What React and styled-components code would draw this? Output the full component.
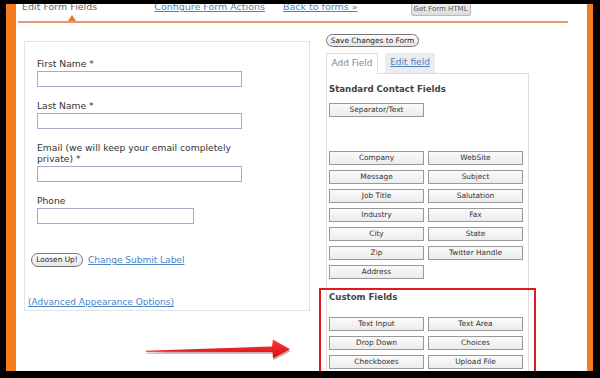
import React from 'react';
import styled, { createGlobalStyle } from 'styled-components';

const GlobalStyle = createGlobalStyle`
  html, body {
    margin: 0;
    padding: 0;
    background: #000;
  }
  * {
    box-sizing: border-box;
  }
`

const Frame = styled.div`
  width: 600px;
  height: 378px;
  background: #000;
  padding: 4px 7px 7px 6px;
  display: flex;
`

const OrangeBand = styled.div`
  flex: 1;
  display: flex;
  background: #f47b20;
  padding: 0 6px 0 10px;
`

const Sheet = styled.div`
  flex: 1;
  background: #fff;
  position: relative;
  overflow: hidden;
  font-family: "DejaVu Sans", Verdana, sans-serif;
  color: #333;
`

const Header = styled.div`
  height: 19px;
  margin: 0 19px 0 2px;
  padding-left: 4px;
  border-bottom: 2px solid #e39b70;
  display: flex;
  align-items: flex-start;
  position: relative;
`

const NavItem = styled.span`
  margin-top: -3px;
  margin-left: ${p => p.$offset || 0}px;
  font-size: 9.5px;
  line-height: 12px;
  color: ${p => (p.$link ? '#4a82c4' : '#666')};
  text-decoration: ${p => (p.$link ? 'underline' : 'none')};
  white-space: nowrap;
`

const NavButton = styled.span`
  margin-left: ${p => p.$offset || 0}px;
  margin-top: -2px;
  width: 60px;
  height: 14px;
  background: linear-gradient(#f0f0f0, #dcdcdc);
  border: 1px solid #bbb;
  border-radius: 2px;
  font-size: 7px;
  line-height: 12px;
  color: #555;
  text-align: center;
`

const Pointer = styled.span`
  position: absolute;
  left: 50px;
  bottom: 0;
  width: 0;
  height: 0;
  border-left: 4px solid transparent;
  border-right: 4px solid transparent;
  border-bottom: 6px solid #e57a2e;
`

const Main = styled.div`
  display: flex;
  align-items: flex-start;
  padding-left: 8px;
  gap: 16px;
`

const FormPanel = styled.div`
  width: 286px;
  height: 270px;
  margin-top: 18px;
  border: 1px solid #e2e2e2;
  padding: 16px 0 0 4px;
  display: flex;
  flex-direction: column;
`

const Fields = styled.div`
  padding-left: 8px;
`

const FieldGroup = styled.div`
  margin-bottom: 13px;
`

const Label = styled.div`
  font-size: 9.2px;
  line-height: 11px;
  color: #333;
  max-width: 212px;
  margin-bottom: 2px;
`

const TextBox = styled.div`
  width: ${p => p.$width}px;
  height: 16px;
  border: 1px solid #aaa7d2;
  background: #fff;
`

const SubmitRow = styled.div`
  display: flex;
  align-items: center;
  gap: 5px;
  margin-top: 16px;
  padding-left: 2px;
`

const PillButton = styled.span`
  display: inline-block;
  width: ${p => p.$width}px;
  height: ${p => p.$height || 14}px;
  border: 1px solid #777;
  border-radius: 8px;
  background: linear-gradient(#fdfdfd, #e4e4e4);
  font-size: 7.4px;
  line-height: ${p => (p.$height || 14) - 2}px;
  color: #222;
  text-align: center;
  white-space: nowrap;
`

const TextLink = styled.span`
  font-size: 9px;
  line-height: 12px;
  color: #4a82c4;
  text-decoration: underline;
  white-space: nowrap;
`

const AdvancedLink = styled(TextLink)`
  margin-top: 29px;
  margin-left: -1px;
`

const SideColumn = styled.div`
  width: 203px;
  padding-top: 5px;
`

const Tabs = styled.div`
  display: flex;
  margin-top: 6px;
  height: 20px;
  align-items: flex-end;
  position: relative;
  z-index: 1;
`

const Tab = styled.div`
  width: ${p => p.$width}px;
  margin-left: ${p => p.$offset || 0}px;
  margin-bottom: ${p => (p.$active ? -1 : 0)}px;
  height: ${p => (p.$active ? 21 : 20)}px;
  background: ${p => (p.$active ? '#fff' : '#ececec')};
  border: ${p => (p.$active ? '1px solid #ddd' : 'none')};
  border-bottom: none;
  font-size: 9px;
  line-height: 19px;
  text-align: center;
  color: ${p => (p.$active ? '#888' : '#4a82c4')};
  text-decoration: ${p => (p.$active ? 'none' : 'underline')};
`

const FieldPanel = styled.div`
  border: 1px solid #ddd;
  border-bottom: none;
  padding: 9px 5px 40px 2px;
`

const SectionTitle = styled.div`
  font-size: 8.6px;
  line-height: 12px;
  font-weight: bold;
  color: #444;
`

const ButtonGrid = styled.div`
  display: grid;
  grid-template-columns: 95px 95px;
  column-gap: 4px;
  row-gap: 5px;
  margin-top: ${p => p.$top}px;
`

const FieldButton = styled.div`
  height: 14px;
  border: 1px solid #999;
  background: linear-gradient(#fafafa, #ececec);
  font-size: 7.4px;
  line-height: 12px;
  text-align: center;
  color: #333;
  white-space: nowrap;
`

const CustomSection = styled.div`
  position: relative;
  margin-top: 9px;
  padding-top: 3px;
  &::before {
    content: '';
    position: absolute;
    top: 0;
    left: -10px;
    right: -13px;
    bottom: -30px;
    border: 2.5px solid #e0191e;
    pointer-events: none;
  }
`

const ArrowMark = styled.svg`
  position: absolute;
  left: 112px;
  top: 330px;
`

const standardFields = [
  'Company', 'WebSite',
  'Message', 'Subject',
  'Job Title', 'Salutation',
  'Industry', 'Fax',
  'City', 'State',
  'Zip', 'Twitter Handle',
  'Address',
];

const customFields = [
  'Text Input', 'Text Area',
  'Drop Down', 'Choices',
  'Checkboxes', 'Upload File',
];

const formFields = [
  { label: 'First Name *', width: 205 },
  { label: 'Last Name *', width: 205 },
  { label: 'Email (we will keep your email completely private) *', width: 205 },
  { label: 'Phone', width: 157 },
];

function Arrow() {
  return (
    <ArrowMark width="166" height="28" viewBox="0 0 166 28">
      <defs>
        <linearGradient id="arrowFill" x1="0" y1="0" x2="0" y2="1">
          <stop offset="0" stopColor="#ff3a3a" />
          <stop offset="1" stopColor="#d10d10" />
        </linearGradient>
      </defs>
      <path
        d="M18 17.5 L144 13.2 L145 6 L162 16 L145 25 L144.5 18.6 L18 18.6 Z"
        fill="#7a0000"
        opacity="0.35"
        transform="translate(0.5 1.2)"
      />
      <path
        d="M18 16.8 L144 12.5 L145 5.5 L162 15.2 L145 24.3 L144.5 18 L18 17.8 Z"
        fill="url(#arrowFill)"
      />
    </ArrowMark>
  );
}

export default function App() {
  return (
    <Frame>
      <GlobalStyle />
      <OrangeBand>
        <Sheet>
          <Header>
            <NavItem>Edit Form Fields</NavItem>
            <NavItem $link $offset={57}>Configure Form Actions</NavItem>
            <NavItem $link $offset={18}>Back to forms »</NavItem>
            <NavButton $offset={53}>Get Form HTML</NavButton>
            <Pointer />
          </Header>

          <Main>
            <FormPanel>
              <Fields>
                {formFields.map(f => (
                  <FieldGroup key={f.label}>
                    <Label>{f.label}</Label>
                    <TextBox $width={f.width} />
                  </FieldGroup>
                ))}
              </Fields>
              <SubmitRow>
                <PillButton $width={52}>Loosen Up!</PillButton>
                <TextLink>Change Submit Label</TextLink>
              </SubmitRow>
              <AdvancedLink>(Advanced Appearance Options)</AdvancedLink>
            </FormPanel>

            <SideColumn>
              <PillButton $width={93} $height={13}>Save Changes to Form</PillButton>
              <Tabs>
                <Tab $active $width={52}>Add Field</Tab>
                <Tab $offset={7} $width={50}>Edit field</Tab>
              </Tabs>
              <FieldPanel>
                <SectionTitle>Standard Contact Fields</SectionTitle>
                <ButtonGrid $top={8}>
                  <FieldButton>Separator/Text</FieldButton>
                </ButtonGrid>
                <ButtonGrid $top={34}>
                  {standardFields.map(name => (
                    <FieldButton key={name}>{name}</FieldButton>
                  ))}
                </ButtonGrid>
                <CustomSection>
                  <SectionTitle>Custom Fields</SectionTitle>
                  <ButtonGrid $top={14}>
                    {customFields.map(name => (
                      <FieldButton key={name}>{name}</FieldButton>
                    ))}
                  </ButtonGrid>
                </CustomSection>
              </FieldPanel>
            </SideColumn>
          </Main>

          <Arrow />
        </Sheet>
      </OrangeBand>
    </Frame>
  );
}
